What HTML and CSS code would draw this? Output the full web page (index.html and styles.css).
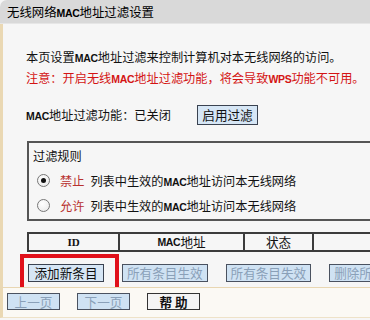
FILE: index.html
```html
<!DOCTYPE html>
<html lang="zh">
<head>
<meta charset="utf-8">
<link rel="stylesheet" href="styles.css">
</head>
<body>
<div class="page">
  <div class="titlebar">无线网络<span class="lat">MAC</span>地址过滤设置</div>
  <div class="content">
    <p class="intro">本页设置<span class="lat">MAC</span>地址过滤来控制计算机对本无线网络的访问。</p>
    <p class="warn">注意：开启无线<span class="lat">MAC</span>地址过滤功能，将会导致<span class="lat">WPS</span>功能不可用。</p>
    <div class="status">
      <span class="status-text"><span class="lat">MAC</span>地址过滤功能：已关闭</span>
      <span class="btn btn-enable">启用过滤</span>
    </div>
    <div class="rules">
      <div class="rules-title">过滤规则</div>
      <div class="rule"><span class="radio checked"></span><span class="kw">禁止</span><span>列表中生效的<span class="lat">MAC</span>地址访问本无线网络</span></div>
      <div class="rule"><span class="radio"></span><span class="kw">允许</span><span>列表中生效的<span class="lat">MAC</span>地址访问本无线网络</span></div>
    </div>
    <div class="table">
      <div class="th th-id">ID</div>
      <div class="th th-mac"><span class="lat">MAC</span>地址</div>
      <div class="th th-state">状态</div>
      <div class="th th-more"></div>
    </div>
    <div class="actions">
      <span class="btn btn-add">添加新条目</span>
      <span class="btn btn-off">所有条目生效</span>
      <span class="btn btn-off">所有条目失效</span>
      <span class="btn btn-off">删除所有条目</span>
      <div class="highlight"></div>
    </div>
  </div>
  <div class="footer">
    <span class="btn btn-off btn-page">上一页</span>
    <span class="btn btn-off btn-page">下一页</span>
    <span class="btn btn-help">帮 助</span>
  </div>
</div>
</body>
</html>
```

FILE: styles.css
```css
* { box-sizing: border-box; }
html, body { margin: 0; padding: 0; }
body {
  width: 370px;
  height: 320px;
  overflow: hidden;
  background: #f6f6f6;
  font-family: "Noto Sans CJK SC", "Noto Sans", sans-serif;
  font-size: 12.2px;
  color: #111;
}
.lat {
  font-family: "Liberation Sans", sans-serif;
  font-size: 10.5px;
  font-weight: bold;
  letter-spacing: -0.3px;
}
.page {
  width: 370px;
  height: 320px;
  overflow: hidden;
  background: #f6f6f6;
  display: flex;
  flex-direction: column;
}
.titlebar {
  height: 24px;
  line-height: 24px;
  padding-left: 7px;
  background: #d9d9d9;
  border-top-left-radius: 7px;
  border-bottom: 1px solid #e6e6e6;
  font-size: 12.4px;
  color: #000;
  flex: none;
}
.content {
  border-left: 3px solid #ead8b3;
  padding-left: 23px;
  padding-top: 23px;
  flex: none;
  height: 263px;
  position: relative;
}
.content p {
  margin: 0;
  line-height: 20px;
  white-space: nowrap;
}
.warn { color: #d41414; }
.status {
  margin-top: 16px;
  display: flex;
  align-items: center;
  height: 20px;
}
.status-text { width: 171px; white-space: nowrap; }
.btn {
  display: inline-flex;
  align-items: center;
  justify-content: center;
  border: 1px solid #3a4250;
  background: #d6e6f5;
  white-space: nowrap;
  flex: none;
  font-size: 12.6px;
  line-height: 16px;
}
.btn-enable { width: 61px; height: 20px; color: #111; }
.rules {
  margin-top: 16px;
  margin-left: 1px;
  width: 360px;
  height: 80px;
  border: 2px solid #555;
  border-right: none;
  padding: 3px 0 0 4px;
}
.rules-title { line-height: 20px; height: 22px; }
.rule {
  display: flex;
  align-items: center;
  height: 25px;
  white-space: nowrap;
}
.radio {
  width: 13px;
  height: 13px;
  border-radius: 50%;
  border: 1px solid #777;
  background: radial-gradient(circle at 40% 35%, #fff 0%, #e8e8e8 100%);
  margin: 0 10px 0 4px;
  display: inline-flex;
  align-items: center;
  justify-content: center;
  flex: none;
}
.radio.checked::after {
  content: "";
  width: 5px;
  height: 5px;
  border-radius: 50%;
  background: #111;
}
.kw { color: #b8312f; margin-right: 6px; }
.table {
  margin-top: 11px;
  margin-left: 1px;
  display: flex;
  height: 20px;
  width: 360px;
  border: 2px solid #3c3c3c;
  border-right: none;
}
.th {
  display: flex;
  align-items: center;
  justify-content: center;
  border-right: 2px solid #3c3c3c;
  font-size: 12.6px;
  line-height: 16px;
  flex: none;
}
.th-id { width: 91px; font-family: "Liberation Serif", serif; font-weight: bold; font-size: 11px; }
.th-mac { width: 125px; }
.th-state { width: 69px; }
.th-more { flex: 1; border-right: none; }
.actions {
  margin-top: 12px;
  margin-left: 2px;
  display: flex;
  gap: 18px;
  height: 18px;
  position: relative;
}
.actions .btn { height: 18px; padding: 0 4px; }
.btn-add { color: #111; width: 76px; }
.btn-off {
  color: #8aa0b8;
  background: #cfe2f3;
  border-color: #4a5260;
}
.highlight {
  position: absolute;
  left: -8px;
  top: -10px;
  width: 99px;
  height: 37px;
  border: 4px solid #e0101a;
}
.footer {
  flex: none;
  height: 31px;
  border-left: 3px solid #ead8b3;
  border-top: 1px solid #e8d6b2;
  border-bottom: 1px solid #eee2c8;
  background: #fbf9f4;
  display: flex;
  align-items: flex-start;
  gap: 17px;
  padding: 5px 0 0 4px;
  position: relative;
  z-index: 0;
}
.btn-page { width: 53px; height: 17px; }
.btn-help {
  width: 53px;
  height: 17px;
  background: #f4f4f4;
  color: #111;
  font-weight: bold;
  border-color: #333;
}
```
